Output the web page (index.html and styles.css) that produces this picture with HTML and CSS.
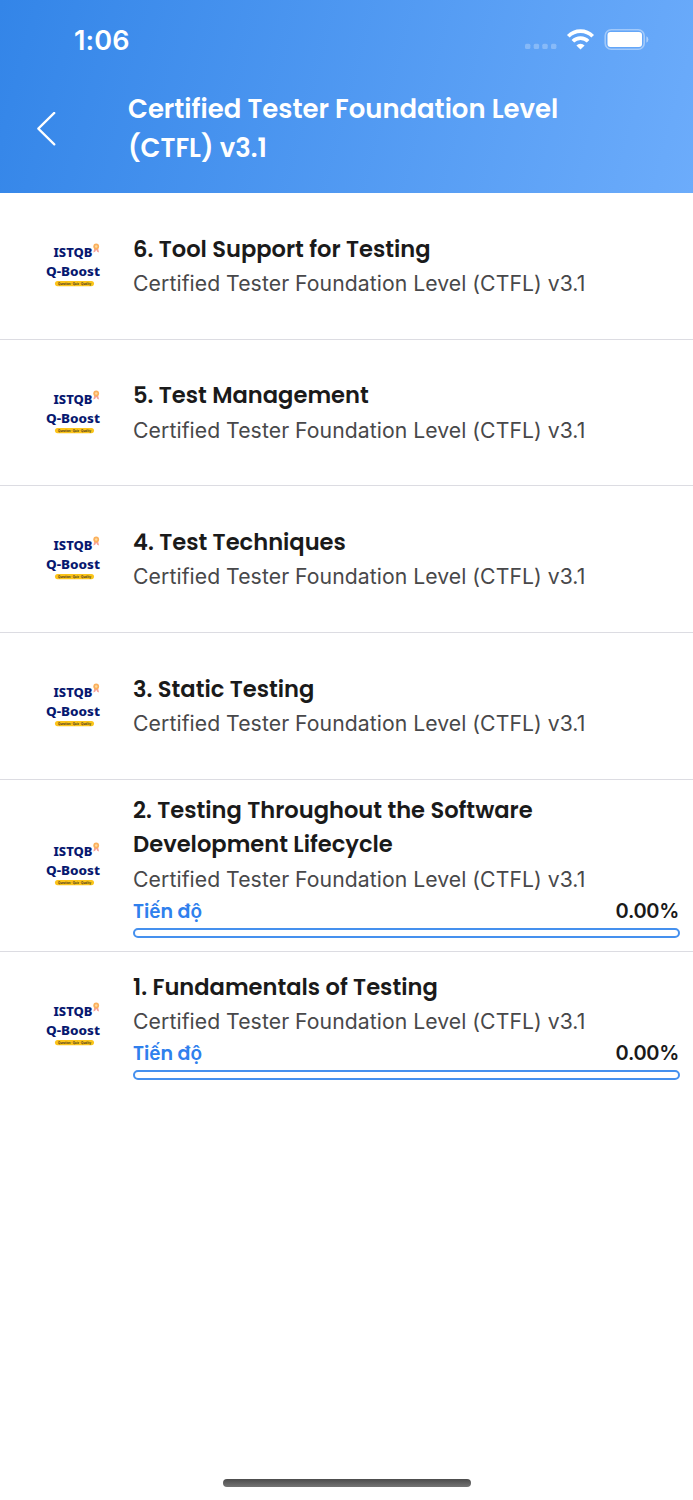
FILE: index.html
```html
<!DOCTYPE html>
<html lang="vi">
<head>
<meta charset="utf-8">
<title>Certified Tester Foundation Level (CTFL) v3.1</title>
<link rel="stylesheet" href="styles.css">
</head>
<body>
<svg class="defs" aria-hidden="true">
  <symbol id="logo" viewBox="0 0 60 50">
    <text class="logo-name" x="10.5" y="16.400" textLength="39" lengthAdjust="spacingAndGlyphs">ISTQB</text>
    <text class="logo-name" x="3" y="34.800" textLength="54" lengthAdjust="spacingAndGlyphs">Q-Boost</text>
    <path d="M51.500 6.500l-1.200 5 1.900-.8 1-2 1 2 1.900.8-1.200-5z" fill="#f5a298"/>
    <circle cx="53.200" cy="5.500" r="2.900" fill="#fbb05c"/>
    <circle cx="53.200" cy="5.500" r="1.200" fill="#fdd9a0"/>
    <rect x="12" y="40" width="39" height="5.200" rx="2.600" fill="#fcc419"/>
    <text class="logo-tag" x="15" y="43.700" textLength="33">Question · Quiz · Quality</text>
  </symbol>
</svg>
<header class="header">
  <div class="status">
    <span class="time">1:06</span>
    <svg class="status-icons" viewBox="0 0 126 24" width="126" height="24">
      <g fill="#fff" fill-opacity=".26">
        <rect x="2" y="15.700" width="5.400" height="5.400" rx="1.500"/>
        <rect x="10.700" y="15.700" width="5.400" height="5.400" rx="1.500"/>
        <rect x="19.300" y="15.700" width="5.400" height="5.400" rx="1.500"/>
        <rect x="28" y="15.700" width="5.400" height="5.400" rx="1.500"/>
      </g>
      <g fill="none" stroke="#fff" stroke-width="3.700">
        <path d="M45.300 8.200a17 17 0 0 1 24.400 0"/>
        <path d="M49.900 13.200a10.700 10.700 0 0 1 15.200 0"/>
      </g>
      <path d="M57.500 21.500l-4.100-4.100a5.800 5.800 0 0 1 8.200 0z" fill="#fff"/>
      <rect x="82.200" y="1.700" width="39" height="19.600" rx="6" fill="none" stroke="#fff" stroke-opacity=".4" stroke-width="1.600"/>
      <rect x="84.500" y="4" width="34.500" height="15" rx="3" fill="#fff"/>
      <path d="M123.400 8.300q2 1 2 3.200t-2 3.200z" fill="#fff" fill-opacity=".45"/>
    </svg>
  </div>
  <div class="nav">
    <svg class="back" viewBox="0 0 20 34" width="20" height="34" fill="none" stroke="#fff" stroke-width="2.200" stroke-linecap="round" stroke-linejoin="round"><path d="M18.300 .9L2.300 16.600l16 15.800"/></svg>
    <h1 class="heading">Certified Tester Foundation Level<br>(CTFL) v3.1</h1>
  </div>
</header>
<main class="list">
  <article class="row">
    <svg class="logo"><use href="#logo"/></svg>
    <div class="info"><h2 class="title">6. Tool Support for Testing</h2><p class="sub">Certified Tester Foundation Level (CTFL) v3.1</p></div>
  </article>
  <article class="row">
    <svg class="logo"><use href="#logo"/></svg>
    <div class="info"><h2 class="title">5. Test Management</h2><p class="sub">Certified Tester Foundation Level (CTFL) v3.1</p></div>
  </article>
  <article class="row">
    <svg class="logo"><use href="#logo"/></svg>
    <div class="info"><h2 class="title">4. Test Techniques</h2><p class="sub">Certified Tester Foundation Level (CTFL) v3.1</p></div>
  </article>
  <article class="row">
    <svg class="logo"><use href="#logo"/></svg>
    <div class="info"><h2 class="title">3. Static Testing</h2><p class="sub">Certified Tester Foundation Level (CTFL) v3.1</p></div>
  </article>
  <article class="row">
    <svg class="logo"><use href="#logo"/></svg>
    <div class="info"><h2 class="title">2. Testing Throughout the Software<br>Development Lifecycle</h2><p class="sub">Certified Tester Foundation Level (CTFL) v3.1</p>
      <div class="progress"><span class="label">Tiến độ</span><span class="value">0.00%</span></div><div class="bar"></div></div>
  </article>
  <article class="row">
    <svg class="logo"><use href="#logo"/></svg>
    <div class="info"><h2 class="title">1. Fundamentals of Testing</h2><p class="sub">Certified Tester Foundation Level (CTFL) v3.1</p>
      <div class="progress"><span class="label">Tiến độ</span><span class="value">0.00%</span></div><div class="bar"></div></div>
  </article>
</main>
<footer class="footer"><div class="home"></div></footer>
</body>
</html>
```
FILE: styles.css
```css
* { box-sizing: border-box; }
body {
  margin: 0;
  height: 1500px;
  display: flex;
  flex-direction: column;
  background: #fff;
  color: #1a1a1a;
  font-family: Poppins, Inter, "Liberation Sans", sans-serif;
}
h1, h2, p { margin: 0; white-space: nowrap; }
.defs { display: none; }
.header {
  height: 193px;
  flex: none;
  color: #fff;
  background: linear-gradient(105deg, #3385e8 0%, #6cacfb 100%);
}
.status {
  height: 80px;
  padding: 0 44px 0 74px;
  display: flex;
  align-items: center;
  justify-content: space-between;
}
.time { font-family: Inter, sans-serif; font-size: 27px; font-weight: 600; letter-spacing: 0.1px; }
.nav { display: flex; align-items: center; padding: 9.5px 0 0 36px; gap: 72px; }
.heading { font-size: 25.9px; font-weight: 600; line-height: 39px; }
.row {
  min-height: 146.7px;
  padding: 13.4px 13px 12.9px 43px;
  display: flex;
  align-items: center;
  gap: 30px;
  border-bottom: 1.3px solid #dcdce2;
}
.row:last-child { border-bottom: 0; min-height: 145.5px; }
.logo { width: 60px; height: 50px; flex: none; }
.logo-name { font: 800 13px "Noto Sans", sans-serif; fill: #07186f; }
.logo-tag { font: 700 2.8px "Noto Sans", sans-serif; fill: #4b3a20; }
.info { flex: 1; }
.title { font-size: 22.6px; font-weight: 600; line-height: 34.3px; }
.sub { font-family: Inter, sans-serif; font-size: 21.2px; line-height: 34.5px; letter-spacing: 0.09px; word-spacing: -0.3px; color: #48484a; }
.progress { display: flex; justify-content: space-between; height: 31.6px; line-height: 32px; padding-right: 1px; font-weight: 600; }
.label { font-size: 19px; color: #2f80ed; }
.value { font-family: Inter, sans-serif; font-size: 20px; line-height: 31px; letter-spacing: -0.3px; }
.bar { height: 10px; border: 2px solid #4590ee; border-radius: 5px; }
.footer { margin-top: auto; padding-bottom: 13px; display: flex; justify-content: center; }
.home { width: 248px; height: 8px; border-radius: 4px; background: linear-gradient(#4c4c4c, #747474); }
```
